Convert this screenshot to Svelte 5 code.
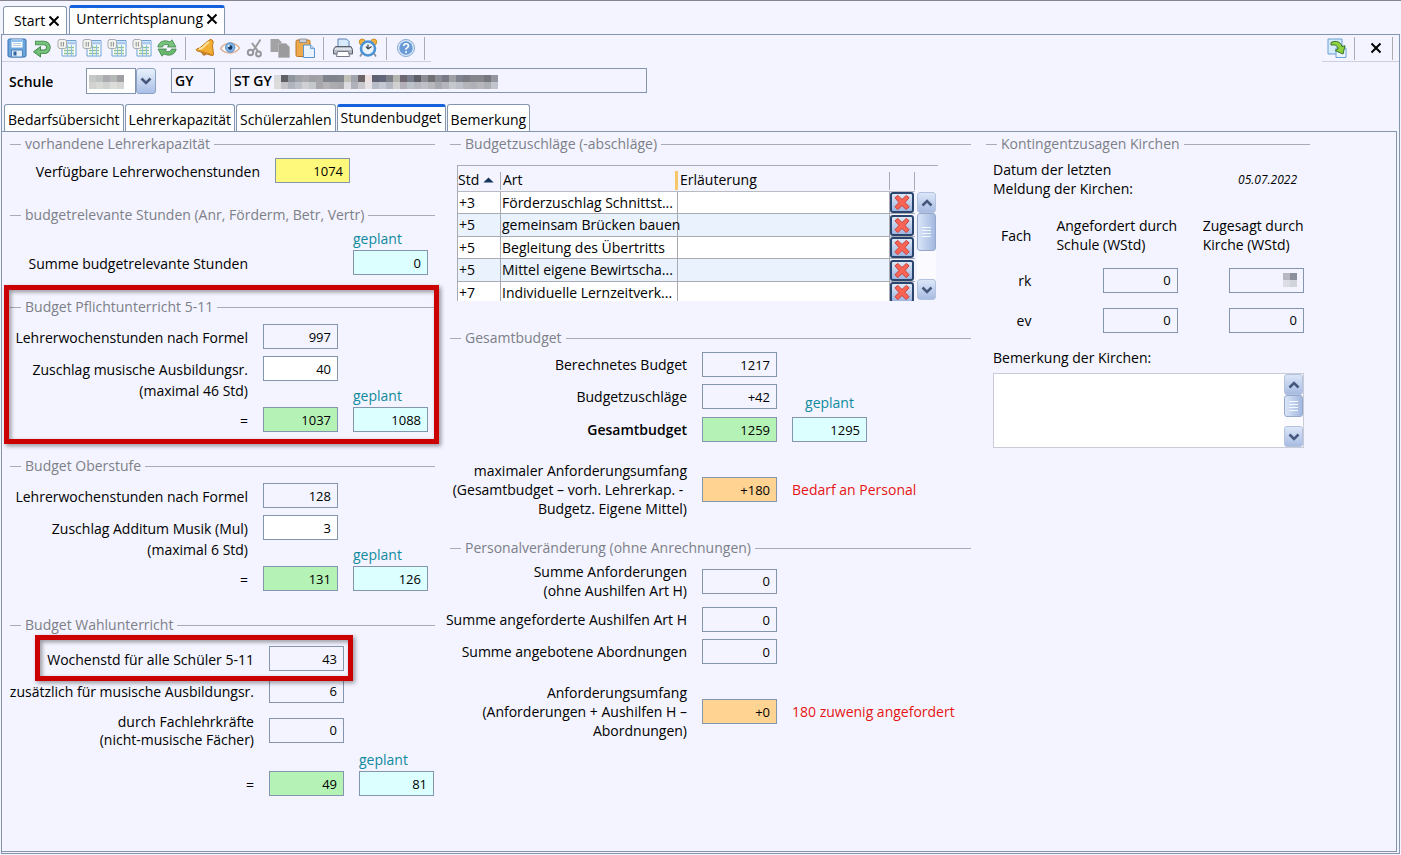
<script>
  const mosaicTop = ['#d9d9dc','#5f5f66','#8f959c','#a0a4a8','#a8a8ae','#a0a0a4','#a3a3a7','#7f838c','#80838c','#84868e','#c0c0b8','#a0a4ac','#6a6468','#ece0e0','#5f6270','#62667a','#7d8088','#b4b4ae','#6e6670','#7a7e8c','#5e5e68','#8c8c94','#707074','#8a8e94','#7a7a86','#9ea0a4','#80828e','#7a7c84','#84868c','#84868c','#76787e','#94989e'];
  const mosaicBottom = ['#dcdcda','#c4c4c8','#b0b4bc','#bcc0c8','#d0d0d4','#c4c8cc','#a8a8ac','#b4b4b8','#acacb0','#a8a8ac','#dcdce0','#b0b0b8','#c8c8cc','#e6e2e6','#b8bcc8','#c4c8d2','#b4b8c0','#d0d0d0','#b4b0b8','#bcc0c8','#b8b8c0','#c0c0c8','#b8b8bc','#a8a8b0','#b4b4bc','#c4c8cc','#bcc0c8','#b4b4b8','#b0b0b8','#b8b8bc','#acb0b4','#c0c4cc'];
  const codeTop = ['#c4c8c6','#bcc0be','#acacb0','#b4b8b6','#a0a0a4'];
  const codeBottom = ['#d2d2d0','#d8d8d4','#cfd2cf','#dcdcda','#d6d6d4'];

  const pageTabs = ['Bedarfsübersicht', 'Lehrerkapazität', 'Schülerzahlen', 'Stundenbudget', 'Bemerkung'];
  let activeTab = $state('Stundenbudget');

  const tools = [
    ['save', 'Speichern'], ['undo', 'Rückgängig'], ['sheet', 'Liste 1'], ['sheet', 'Liste 2'],
    ['sheet', 'Liste 3'], ['sheet', 'Liste 4'], ['refresh', 'Aktualisieren'], ['sep', ''],
    ['bell', 'Hinweise'], ['eye', 'Ansicht'], ['cut', 'Ausschneiden'], ['copy', 'Kopieren'],
    ['paste', 'Einfügen'], ['sep', ''], ['print', 'Drucken'], ['clock', 'Wiedervorlage'], ['sep', ''],
    ['help', 'Hilfe'], ['sep', '']
  ];

  const surcharges = [
    ['+3', 'Förderzuschlag Schnittst...'],
    ['+5', 'gemeinsam Brücken bauen'],
    ['+5', 'Begleitung des Übertritts'],
    ['+5', 'Mittel eigene Bewirtscha...'],
    ['+7', 'Individuelle Lernzeitverk...']
  ];
</script>

{#snippet icon(name)}
  <svg class="icon" viewBox="0 0 20 20" aria-hidden="true">
    {#if name === 'save'}
      <path d="M1 2.5Q1 1 2.5 1h15Q19 1 19 2.500v15Q19 19 17.500 19h-15Q1 19 1 17.500z" fill="#6ba5de" stroke="#356fae" />
      <path d="M4.500 1.500h11v8h-11z" fill="#fff" /><path d="M4.500 2h11v2h-11z" fill="#8cc0ee" />
      <path d="M6 5.500h8M6 7.500h8" stroke="#b8cbe0" />
      <path d="M4.500 12h11v7h-11z" fill="#e3edf7" stroke="#4b82bb" /><path d="M6.500 13.500h3v4h-3z" fill="#31639c" />
    {:else if name === 'undo'}
      <path d="M3 5h9a4.400 4.400 0 0 1 0 8.800H7" fill="none" stroke="#3f8a48" stroke-width="4.600" />
      <path d="M8.500 8.500v10.500L1.500 13.800z" fill="#6cba73" stroke="#3f8a48" />
      <path d="M3.700 5H12a4.400 4.400 0 0 1 0 8.800H6" fill="none" stroke="#79c27e" stroke-width="2.800" />
    {:else if name === 'sheet'}
      <path d="M5 2.500h14v15.500H5z" fill="#fff" stroke="#6fa0d4" />
      <path d="M6 3.500h12v3H6z" fill="#a9cbee" />
      <path d="M7 9.500h10M7 12.500h10M7 15.500h10" stroke="#8ac48b" stroke-width="1.400" /><path d="M10.500 7v11M14.500 7v11" stroke="#90bce6" />
      <rect x="1" y="1.500" width="8.500" height="9" rx="2" fill="#f2f2ef" stroke="#a9abab" /><path d="M4.200 4v4.500M6.400 4v4.500" stroke="#8f9092" />
    {:else if name === 'refresh'}
      <path d="M.8 9C2 3 8 1.500 13 4L15 1.800 19 9 10.500 9 12 7C8 5.800 6 6.500 5.500 9z" fill="#79c27e" stroke="#3c8544" stroke-width=".8" />
      <path d="M19.200 11C18 17 12 18.500 7 16L5 18.200 1 11 9.500 11 8 13C12 14.200 14 13.500 14.500 11z" fill="#6ab870" stroke="#3c8544" stroke-width=".8" />
    {:else if name === 'bell'}
      <path d="M13.500 2.500q3-2.500 4.500.5c.8 2-.5 3-.5 5l1 8q.2 2-2 1.500L2 12.800q-2-1 0-2 3-.4 5-2.800z" fill="#f2ae35" stroke="#bb761b" />
      <path d="M4 11.200c5-.5 6.500-6 10-7.200" stroke="#ffe298" stroke-width="2" fill="none" />
      <path d="M7 14.800q1 4 4.500 1.300" fill="#c97f1c" stroke="#9d6115" stroke-width=".8" /><path d="M4 12.500l13 4" stroke="#cf8521" />
    {:else if name === 'eye'}
      <path d="M.5 10.500C5 3.500 15 3.500 19.500 10 15 16.500 5 16.500.5 10.500z" fill="#fff" stroke="#dcb096" stroke-width="1.500" />
      <circle cx="10.200" cy="9.500" r="4.800" fill="#7fb2e4" stroke="#4f87c4" stroke-width=".8" /><circle cx="10.200" cy="9.500" r="2.200" fill="#16355e" /><circle cx="8.800" cy="8" r="1" fill="#fff" />
    {:else if name === 'cut'}
      <path d="M15.500 1.500L8 13M7 5l6.500 9" stroke="#9a9b9e" stroke-width="2" fill="none" />
      <circle cx="5.500" cy="14.500" r="2.700" fill="none" stroke="#96979b" stroke-width="2" /><circle cx="13.500" cy="16" r="2.400" fill="none" stroke="#96979b" stroke-width="2" />
    {:else if name === 'copy'}
      <path d="M.5 1h8l3 3v10H.5z" fill="#a3a3a5" /><path d="M8.500 5.500h7.500l3.500 3.500v10.500h-11z" fill="#9b9b9d" stroke="#b9b9bb" stroke-width=".8" />
    {:else if name === 'paste'}
      <rect x="1" y="2" width="14" height="16.500" rx="1.500" fill="#eda94a" stroke="#b87420" /><path d="M4.500 1h7v3.500h-7z" fill="#ccd0d6" stroke="#85888f" stroke-width=".8" />
      <path d="M8.500 7h7l4 3.500v9h-11z" fill="#e9f3fd" stroke="#5d94cf" /><path d="M15.500 7v3.500h4" fill="#b7d6f3" stroke="#5d94cf" stroke-width=".8" />
    {:else if name === 'print'}
      <path d="M5 1h8.500l2.500 2.500V10H5z" fill="#d7eafb" stroke="#5c7fae" /><path d="M2.500 8.500h15.500l1.500 3v4.500h-19v-4.500z" fill="#b4b9c2" stroke="#5a616c" />
      <path d="M2 11h16" stroke="#eef0f3" stroke-width="1.500" /><path d="M4.500 13.500h11l1 5h-13z" fill="#fff" stroke="#757b86" />
    {:else if name === 'clock'}
      <path d="M4 15.500l-2 3M16 15.500l2 3" stroke="#8a8d93" stroke-width="1.600" />
      <circle cx="4.200" cy="4" r="3" fill="#f3b43e" stroke="#bf7f1c" stroke-width=".8" /><circle cx="15.800" cy="4" r="3" fill="#f3b43e" stroke="#bf7f1c" stroke-width=".8" />
      <circle cx="10" cy="10.500" r="7" fill="#e9f3fc" stroke="#4d92d3" stroke-width="2.600" /><path d="M10 11V6.500M10 11l3.500-2.500M10 11L8 8.500" stroke="#39414e" stroke-width="1.200" />
    {:else if name === 'help'}
      <circle cx="10" cy="10" r="8.500" fill="#dbe8f7" stroke="#86aad6" /><circle cx="10" cy="10" r="6.700" fill="#6a9bd6" />
      <path d="M7.600 8q.3-2.300 2.500-2.300T12.500 7.800Q12.500 9.200 10 10.800v.9" fill="none" stroke="#fff" stroke-width="1.600" /><circle cx="10" cy="14" r="1" fill="#fff" />
    {:else if name === 'export'}
      <path d="M1 1h14v15H1z" fill="#d7eafb" stroke="#6c9fd4" /><path d="M9 10h10v9.500H9z" fill="#e9f4fd" stroke="#6c9fd4" />
      <path d="M4 4.500C9 2 14 4 15 8.500l3-.8L16 16 8 12.500l3-1.500C11 8 9 6.500 4 7z" fill="#8fd13f" stroke="#35722a" />
    {:else if name === 'close'}
      <path d="M5.500 5.500l9 9M14.500 5.500l-9 9" stroke="#000" stroke-width="2" />
    {/if}
  </svg>
{/snippet}

{#snippet chevron(up)}
  <svg class="chev" viewBox="0 0 12 8" aria-hidden="true"><path d={up ? 'M1.500 6.500L6 2l4.500 4.500' : 'M1.500 1.500L6 6l4.500-4.500'} /></svg>
{/snippet}

{#snippet scrollbar(cls)}
  <div class="scrollbar {cls}">
    <button type="button" aria-label="Nach oben">{@render chevron(true)}</button>
    <span class="thumb"><i></i><i></i><i></i><i></i></span>
    <button type="button" class="down" aria-label="Nach unten">{@render chevron(false)}</button>
  </div>
{/snippet}

{#snippet mosaic(rows)}
  <svg class="mosaic" viewBox="0 0 {rows[0].length * 7} 14" style="width: {rows[0].length * 7}px" preserveAspectRatio="none" shape-rendering="crispEdges" aria-hidden="true">
    {#each rows as row, r}
      {#each row as color, c}<rect x={c * 7} y={r * 7} width="7" height="7" fill={color} />{/each}
    {/each}
  </svg>
{/snippet}

{#snippet field(id, text, value, kind = '', gap = '')}
  <label for={id} class={gap}>{text}</label>
  <input {id} class="num {kind} {gap}" {value} readonly={kind !== 'edit'} />
{/snippet}

{#snippet planned(id, value, cls = '')}
  <div class="planned {cls}">
    <label for={id}>geplant</label>
    <input {id} class="num plan" {value} readonly />
  </div>
{/snippet}

<div class="app">
  <nav class="doc-tabs">
    <div class="doc-tab"><button type="button">Start</button><button type="button" class="x" aria-label="Start schließen"><svg viewBox="0 0 12 12"><path d="M1.500 1.500l9 9M10.500 1.500l-9 9" /></svg></button></div>
    <div class="doc-tab active"><button type="button">Unterrichtsplanung</button><button type="button" class="x" aria-label="Unterrichtsplanung schließen"><svg viewBox="0 0 12 12"><path d="M1.500 1.500l9 9M10.500 1.500l-9 9" /></svg></button></div>
  </nav>

  <main class="window">
    <div class="toolbars">
      <div class="toolbar">
        {#each tools as [name, title]}
          {#if name === 'sep'}<span class="sep"></span>
          {:else}<button type="button" aria-label={title}>{@render icon(name)}</button>{/if}
        {/each}
      </div>
      <div class="toolbar end">
        <button type="button" aria-label="Exportieren">{@render icon('export')}</button><span class="sep"></span>
        <button type="button" class="close" aria-label="Schließen">{@render icon('close')}</button><span class="sep"></span>
      </div>
    </div>

    <div class="school">
      <label for="school">Schule</label>
      <div class="combo">
        <select id="school"><option value=""></option></select>
        {@render mosaic([codeTop, codeBottom])}
        <span class="arrow">{@render chevron(false)}</span>
      </div>
      <input class="type" value="GY" readonly aria-label="Schulart" />
      <div class="name">
        <input value="ST GY" readonly aria-label="Schulname" />
        {@render mosaic([mosaicTop, mosaicBottom])}
      </div>
    </div>

    <div class="tabs" role="tablist">
      {#each pageTabs as tab}
        <button type="button" role="tab" aria-selected={tab === activeTab} class:active={tab === activeTab} onclick={() => (activeTab = tab)}>{tab}</button>
      {/each}
    </div>

    <div class="panel" role="tabpanel">
      <div class="column">
        <section class="available">
          <h2>vorhandene Lehrerkapazität</h2>
          <div class="form">{@render field('avail', 'Verfügbare Lehrerwochenstunden', '1074', 'yellow')}</div>
        </section>
        <section class="relevant">
          <h2>budgetrelevante Stunden (Anr, Förderm, Betr, Vertr)</h2>
          <div class="form">
            <label for="relevant" class="low">Summe budgetrelevante Stunden</label>
            {@render planned('relevant', '0')}
          </div>
        </section>
        <section class="marked required">
          <h2>Budget Pflichtunterricht 5-11</h2>
          <div class="form">
            {@render field('formula1', 'Lehrerwochenstunden nach Formel', '997')}
            {@render field('music1', 'Zuschlag musische Ausbildungsr.', '40', 'edit', 'g7')}
            <span class="hint">(maximal 46 Std)</span>
            {@render field('sum1', '=', '1037', 'green')}
            {@render planned('plan1', '1088', 'r34')}
          </div>
        </section>
        <section class="upper">
          <h2>Budget Oberstufe</h2>
          <div class="form">
            {@render field('formula2', 'Lehrerwochenstunden nach Formel', '128')}
            {@render field('music2', 'Zuschlag Additum Musik (Mul)', '3', 'edit', 'g7')}
            <span class="hint">(maximal 6 Std)</span>
            {@render field('sum2', '=', '131', 'green')}
            {@render planned('plan2', '126', 'r34')}
          </div>
        </section>
        <section class="elective">
          <h2>Budget Wahlunterricht</h2>
          <div class="form">
            <div class="mark-row">{@render field('weekly', 'Wochenstd für alle Schüler 5-11', '43')}</div>
            {@render field('extra', 'zusätzlich für musische Ausbildungsr.', '6', '', 'g7')}
            {@render field('special', 'durch Fachlehrkräfte\n(nicht-musische Fächer)', '0', '', 'g8')}
            {@render field('sum3', '=', '49', 'green', 'g22')}
            {@render planned('plan3', '81', 'r34')}
          </div>
        </section>
      </div>

      <div class="column middle">
        <section>
          <h2>Budgetzuschläge (-abschläge)</h2>
          <div class="grid-box">
            <table>
              <thead>
                <tr><th class="c-std">Std <svg viewBox="0 0 12 7" aria-hidden="true"><path d="M0 6.500L6 .5l6 6z" /></svg></th><th class="c-art">Art</th><th class="c-note">Erläuterung</th><th class="c-del"></th></tr>
              </thead>
              <tbody>
                {#each surcharges as [hours, kind]}
                  <tr><td>{hours}</td><td>{kind}</td><td></td><td class="del"><button type="button" aria-label="{kind} löschen"><svg viewBox="0 0 18 18" aria-hidden="true"><path d="M1.500 4L4.500 1.500 9 5.800 13.500 1.500 16.500 4 12.200 9l4.300 4.500-3 3L9 12.200l-4.500 4.300-3-3L5.800 9z" /></svg></button></td></tr>
                {/each}
              </tbody>
            </table>
            {@render scrollbar('list')}
          </div>
        </section>
        <section class="total">
          <h2>Gesamtbudget</h2>
          <div class="form">
            {@render field('calc', 'Berechnetes Budget', '1217')}
            {@render field('surcharge', 'Budgetzuschläge', '+42', '', 'g7')}
            {@render field('total', 'Gesamtbudget', '1259', 'green', 'g8 strong')}
            {@render planned('plan4', '1295', 'r23')}
            {@render field('maximum', 'maximaler Anforderungsumfang\n(Gesamtbudget – vorh. Lehrerkap. - \nBudgetz. Eigene Mittel)', '+180', 'orange', 'g19')}
            <output class="g19">Bedarf an Personal</output>
          </div>
        </section>
        <section class="staff">
          <h2>Personalveränderung (ohne Anrechnungen)</h2>
          <div class="form">
            {@render field('requests', 'Summe Anforderungen\n(ohne Aushilfen Art H)', '0')}
            {@render field('helpers', 'Summe angeforderte Aushilfen Art H', '0', '', 'g7')}
            {@render field('offers', 'Summe angebotene Abordnungen', '0', '', 'g7')}
            {@render field('scope', 'Anforderungsumfang\n(Anforderungen + Aushilfen H –\nAbordnungen)', '+0', 'orange', 'g19')}
            <output class="g19">180 zuwenig angefordert</output>
          </div>
        </section>
      </div>

      <div class="column">
        <section class="church">
          <h2>Kontingentzusagen Kirchen</h2>
          <div class="church-body">
            <div class="date"><span>Datum der letzten<br />Meldung der Kirchen:</span><time datetime="2022-07-05">05.07.2022</time></div>
            <table class="quota">
              <thead><tr><th>Fach</th><th>Angefordert durch<br />Schule (WStd)</th><th>Zugesagt durch<br />Kirche (WStd)</th></tr></thead>
              <tbody>
                <tr><th>rk</th><td><input class="num" value="0" readonly aria-label="rk angefordert" /></td><td class="hidden-value"><input class="num" value="" readonly aria-label="rk zugesagt" />{@render mosaic([['#b8b8c2', '#8c909c'], ['#dcdce4', '#d2d4dc']])}</td></tr>
                <tr><th>ev</th><td><input class="num" value="0" readonly aria-label="ev angefordert" /></td><td><input class="num" value="0" readonly aria-label="ev zugesagt" /></td></tr>
              </tbody>
            </table>
            <label for="remark">Bemerkung der Kirchen:</label>
            <div class="remark"><textarea id="remark"></textarea>{@render scrollbar('short')}</div>
          </div>
        </section>
      </div>
    </div>
  </main>
</div>

<style>
  :global(body) { margin: 0; background: #f3f4ff; }
  :global(#app) { min-height: 100vh; display: flex; }
  .app, .app * { box-sizing: border-box; }
  .app {
    --edge: #8496ad;
    flex: 1; display: flex; flex-direction: column; min-width: 0;
    border-top: 1px solid #85858f; padding-bottom: 1px;
    font: 14px/19px "Open Sans", "Noto Sans", sans-serif; color: #000;
  }
  button, input, select, textarea { font: inherit; color: inherit; margin: 0; }
  button { padding: 0; border: 0; background: none; }
  input { min-width: 0; }

  .doc-tabs { display: flex; align-items: flex-end; gap: 2px; height: 33px; padding-left: 3px; }
  .doc-tab { display: flex; align-items: center; gap: 3px; height: 28px; padding: 0 6px 0 10px; background: #fff; border: 1px solid var(--edge); border-bottom: 0; border-radius: 3px 3px 0 0; }
  .doc-tab.active { height: 29px; padding: 0 6px 5px; border-top: 3px solid #1560dc; }
  .x { display: flex; }
  .x svg { width: 12px; height: 12px; fill: none; stroke: #000; stroke-width: 2; }

  .window { flex: 1; display: flex; flex-direction: column; margin: 0 1px; border: 1px solid var(--edge); padding: 0 2px 1px 0; }
  .toolbars { display: flex; justify-content: space-between; }
  .toolbar { display: flex; align-items: center; height: 27px; padding: 0 0 0 2px; border-bottom: 1px solid #cdcfdc; }
  .toolbar button { width: 25px; height: 24px; display: flex; align-items: center; justify-content: center; }
  .toolbar.end { margin-right: -2px; padding-left: 4px; }
  .toolbar.end button { width: 22px; }
  .toolbar.end .close { width: 25px; padding-left: 5px; }
  .icon { flex: none; width: 20px; height: 20px; }
  .sep { width: 1px; height: 23px; margin: 0 6px; background: #a9abb5; }

  .school { display: flex; align-items: flex-start; padding: 6px 0 0 7px; height: 42px; font-weight: 600; }
  .school > label { width: 77px; padding-top: 4px; }
  .mosaic { position: absolute; height: 14px; }
  .combo { position: relative; width: 70px; margin-right: 15px; }
  .combo select { appearance: none; width: 50px; height: 26px; background: #fff; border: 1px solid var(--edge); display: block; }
  .combo .mosaic { left: 3px; top: 7px; }
  .arrow { position: absolute; right: 0; top: 0; width: 20px; height: 26px; display: grid; place-items: center; border: 1px solid #8ca2c4; border-radius: 3px; background: linear-gradient(#e9f1fc, #a9bfe6); pointer-events: none; }
  .chev { width: 12px; height: 8px; fill: none; stroke: #46597c; stroke-width: 2.500; }
  .school input { display: block; height: 25px; border: 1px solid var(--edge); background: transparent; padding: 0 3px; font-weight: 600; }
  .type { width: 44px; margin-right: 15px; }
  .name { position: relative; width: 417px; }
  .name input { width: 100%; }
  .name .mosaic { left: 44px; top: 7px; }

  .tabs { display: flex; gap: 1px; padding-left: 2px; height: 27px; }
  .tabs button { height: 27px; padding: 3px 3px 0; background: #fff; border: 1px solid var(--edge); border-bottom: 0; border-radius: 3px 3px 0 0; }
  .tabs .active { padding: 0 3px 3px; border-top: 3px solid #1560dc; }

  .panel { flex: 1; display: grid; grid-template-columns: 425fr 521fr 324fr; gap: 15px; align-items: start; border: 1px solid var(--edge); border-left: 0; padding: 2px 86px 20px 8px; }
  h2 { display: flex; align-items: center; gap: 4px; margin: 0; font: inherit; line-height: 20px; color: #7d8088; white-space: nowrap; }
  h2::before, h2::after { content: ""; height: 1px; background: #a9abb2; width: 11px; }
  h2::after { flex: 1; }

  .form { --label: 238px; display: grid; grid-template-columns: var(--label) 75px 75px; column-gap: 15px; align-items: center; }
  .form label, .form .hint { grid-column: 1; justify-self: end; text-align: right; white-space: pre; }
  .form > label, .mark-row label { padding-top: 2px; }
  .form label { line-height: 18px; }
  .num { grid-column: 2; width: 75px; height: 25px; padding: 0 6px; text-align: right; border: 1px solid var(--edge); background: transparent; font-size: 13px; border-radius: 0; }
  .edit { background: #fff; }
  .yellow { background: #fff97b; }
  .green { background: #b5f2b5; }
  .orange { background: #ffd391; }
  .plan { background: #dcffff; display: block; }
  .planned { grid-column: 3; align-self: end; display: flex; flex-direction: column; gap: 1px; }
  .form .planned label { align-self: flex-start; line-height: 20px; padding: 0; color: #108a9e; }
  .g7 { margin-top: 7px; } .g8 { margin-top: 8px; } .g19 { margin-top: 19px; } .g22 { margin-top: 22px; }
  .r34 { grid-row: 3 / 5; }
  .r23 { grid-row: 2 / 4; gap: 4px; }
  .form .r23 label { align-self: center; }
  .hint { height: 26px; }
  .low { align-self: end; margin-bottom: 2px; }
  label.strong { font-weight: 600; }

  .available .form { grid-template-columns: 250px 75px; padding-top: 4px; }
  .relevant { margin-top: 22px; }
  .relevant .form { padding-top: 4px; }
  .required { margin-top: 22px; }
  .required .form, .upper .form { padding-top: 7px; }
  .upper { margin-top: 24px; }
  .elective { margin-top: 24px; }
  .elective .form { --label: 244px; padding-top: 11px; }
  .mark-row { grid-column: 1 / 3; display: grid; grid-template-columns: subgrid; align-items: center; }
  .marked, .mark-row { position: relative; }
  .marked::after, .mark-row::after { content: ""; position: absolute; border: 5px solid #cb0000; filter: drop-shadow(2px 2px 2px #0006); pointer-events: none; }
  .marked::after { inset: -12px -4px -12px -6px; }
  .mark-row::after { inset: -11px -9px -10px 25px; z-index: 1; }

  .grid-box { display: flex; width: 481px; max-width: 100%; height: 136px; margin: 11px 0 0 7px; overflow: hidden; border: solid #a9abb2; border-width: 1px 0 0 1px; }
  .grid-box table { flex: none; width: 457px; table-layout: fixed; border-collapse: separate; border-spacing: 0; line-height: 18px; }
  .grid-box th { height: 26px; padding: 3px 2px 0; text-align: left; font-weight: 400; border-bottom: 1px solid #b9bbc2; white-space: nowrap; background: linear-gradient(#a9abb2, #a9abb2) right 6px / 1px 18px no-repeat; }
  .grid-box th.c-art { background: linear-gradient(#f8c66a, #f8c66a) right 5px / 3px 19px no-repeat; }
  .c-std { width: 43px; } .c-art { width: 177px; } .c-del { width: 25px; }
  .grid-box th.c-std { padding-left: 0; }
  .c-std svg { width: 11px; height: 6px; fill: #16365c; vertical-align: 2px; }
  .grid-box td { height: 22px; padding: 0 0 0 1px; white-space: nowrap; background: #fff; border: solid #a9abb2; border-width: 0 1px 1px 0; }
  .grid-box tr:nth-child(even) td { height: 23px; background: #eaf2fd; }
  .grid-box tr td.del { padding: 0; border-right: 0; background: none; }
  .del button { display: grid; place-items: center; width: 24px; height: 21px; border: 2px solid #2b466e; border-radius: 3px; background: linear-gradient(#dfe9f8, #9fb6e0); }
  .del svg { width: 18px; height: 17px; fill: #fa6454; stroke: #c93a33; }

  .scrollbar { display: flex; flex-direction: column; width: 19px; background: #fbfbff; }
  .scrollbar.list { margin: 26px 0 1px 2px; }
  .scrollbar button { display: grid; place-items: center; height: 21px; border: 1px solid #b3c2de; border-radius: 3px; background: linear-gradient(#dbe6f8, #a8bce2); }
  .scrollbar .down { margin-top: auto; }
  .thumb { display: flex; flex-direction: column; align-items: center; justify-content: center; gap: 2px; height: 38px; border: 1px solid #96a9cc; border-radius: 3px; background: linear-gradient(90deg, #d9e5f8, #a3b8e0); }
  .short .thumb { height: 22px; }
  .thumb i { width: 9px; height: 1px; background: #f4f8ff; }

  .total { margin-top: 27px; }
  .middle .form { --label: 237px; padding-top: 4px; }
  .staff { margin-top: 20px; }
  .middle .form > label { line-height: 19px; padding-top: 0; }
  output { grid-column: 3; white-space: nowrap; color: #e61414; }

  .church-body { width: 311px; margin: 6px 0 0 7px; }
  .date { display: flex; justify-content: space-between; align-items: center; }
  time { font-style: italic; font-size: 12px; margin-right: 7px; }
  .quota { width: 100%; border-collapse: collapse; margin: 18px 0 8px; text-align: right; }
  .quota th { font-weight: 400; padding: 0; white-space: nowrap; }
  .quota thead th { text-align: left; padding: 0 0 6px 25px; }
  .quota thead th:first-child { padding-left: 8px; }
  .quota tbody th { text-align: right; }
  .quota td { height: 40px; padding: 0; }
  .hidden-value { position: relative; }
  .hidden-value .mosaic { right: 7px; top: 13px; }
  .church-body label { display: block; }
  .remark { display: flex; height: 75px; margin-top: 6px; border: 1px solid #c9cbd6; background: #fff; }
  .remark textarea { flex: 1; min-width: 0; border: 0; resize: none; background: none; }
</style>
